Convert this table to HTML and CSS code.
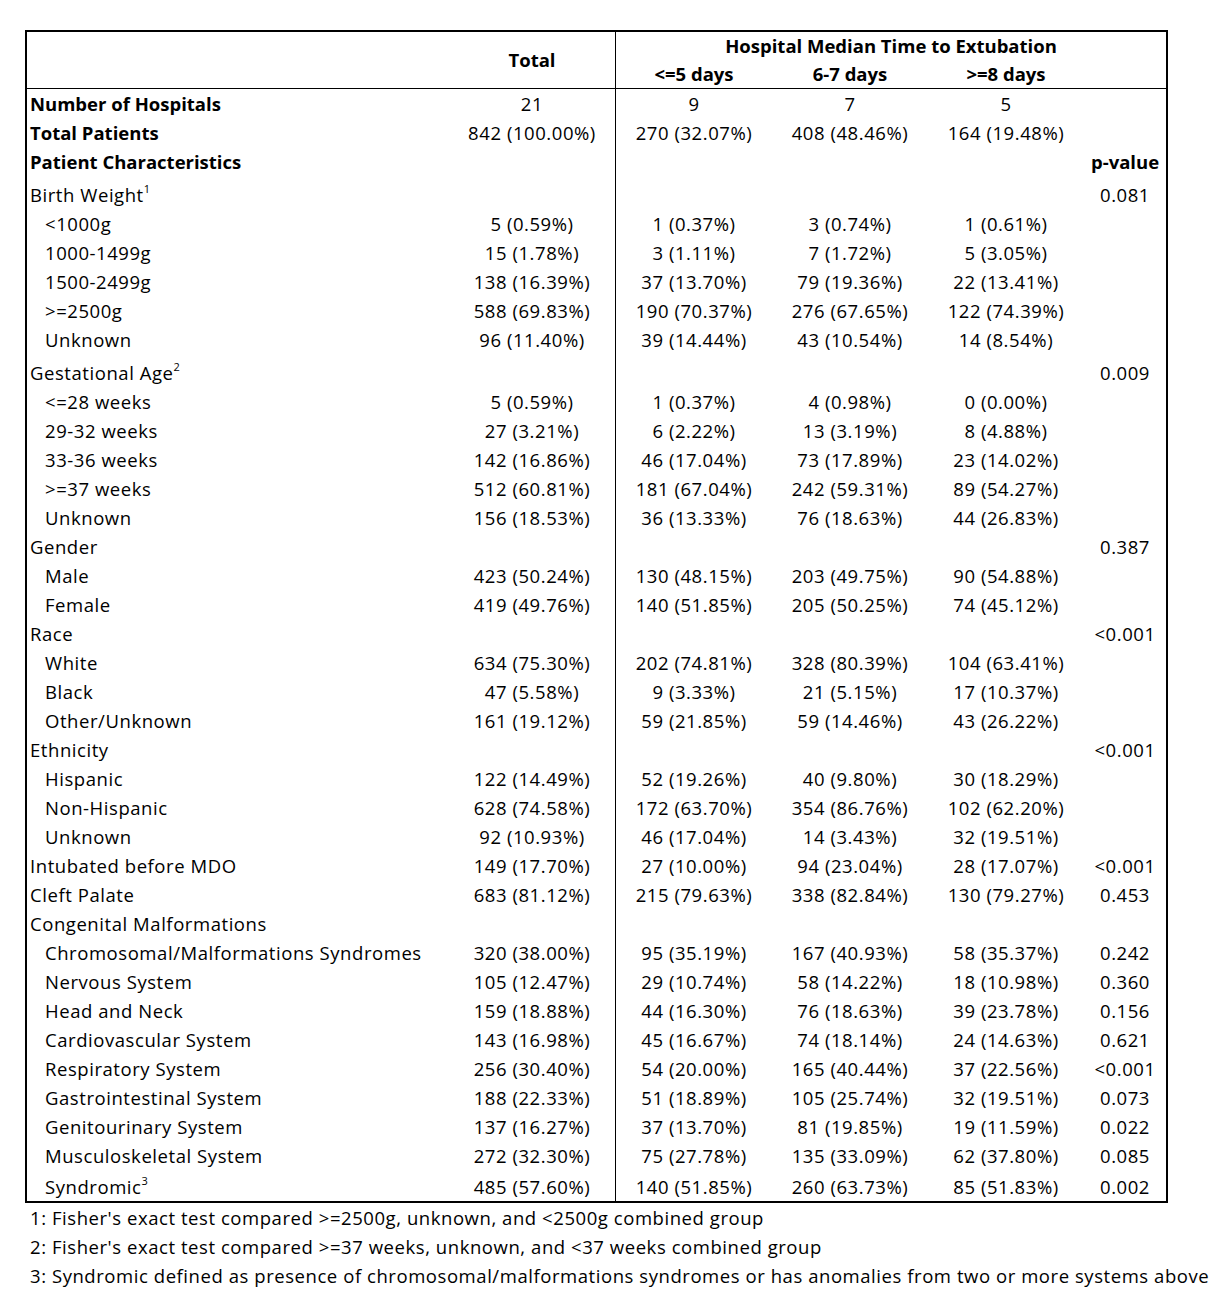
FILE: index.html
```html
<!DOCTYPE html>
<html>
<head>
<meta charset="utf-8">
<link rel="stylesheet" href="styles.css">
</head>
<body>
<div class="page">
<table class="tbl">
<colgroup>
<col class="c-label"><col class="c-total"><col class="c-g1"><col class="c-g"><col class="c-g"><col class="c-p">
</colgroup>
<thead>
<tr class="h1"><th></th><th rowspan="2" class="total-h">Total</th><th colspan="4" class="grp-h vl">Hospital Median Time to Extubation</th></tr>
<tr class="h2"><th></th><th class="vl">&lt;=5 days</th><th>6-7 days</th><th>&gt;=8 days</th><th></th></tr>
</thead>
<tbody>
<tr class="b"><td class="l0">Number of Hospitals</td><td>21</td><td class="vl">9</td><td>7</td><td>5</td><td></td></tr>
<tr class="b"><td class="l0">Total Patients</td><td>842 (100.00%)</td><td class="vl">270 (32.07%)</td><td>408 (48.46%)</td><td>164 (19.48%)</td><td></td></tr>
<tr class="b"><td class="l0">Patient Characteristics</td><td></td><td class="vl"></td><td></td><td></td><td class="pv">p-value</td></tr>
<tr class="sup"><td class="l0">Birth Weight<sup>1</sup></td><td></td><td class="vl"></td><td></td><td></td><td>0.081</td></tr>
<tr><td class="l1">&lt;1000g</td><td>5 (0.59%)</td><td class="vl">1 (0.37%)</td><td>3 (0.74%)</td><td>1 (0.61%)</td><td></td></tr>
<tr><td class="l1">1000-1499g</td><td>15 (1.78%)</td><td class="vl">3 (1.11%)</td><td>7 (1.72%)</td><td>5 (3.05%)</td><td></td></tr>
<tr><td class="l1">1500-2499g</td><td>138 (16.39%)</td><td class="vl">37 (13.70%)</td><td>79 (19.36%)</td><td>22 (13.41%)</td><td></td></tr>
<tr><td class="l1">&gt;=2500g</td><td>588 (69.83%)</td><td class="vl">190 (70.37%)</td><td>276 (67.65%)</td><td>122 (74.39%)</td><td></td></tr>
<tr><td class="l1">Unknown</td><td>96 (11.40%)</td><td class="vl">39 (14.44%)</td><td>43 (10.54%)</td><td>14 (8.54%)</td><td></td></tr>
<tr class="sup"><td class="l0">Gestational Age<sup>2</sup></td><td></td><td class="vl"></td><td></td><td></td><td>0.009</td></tr>
<tr><td class="l1">&lt;=28 weeks</td><td>5 (0.59%)</td><td class="vl">1 (0.37%)</td><td>4 (0.98%)</td><td>0 (0.00%)</td><td></td></tr>
<tr><td class="l1">29-32 weeks</td><td>27 (3.21%)</td><td class="vl">6 (2.22%)</td><td>13 (3.19%)</td><td>8 (4.88%)</td><td></td></tr>
<tr><td class="l1">33-36 weeks</td><td>142 (16.86%)</td><td class="vl">46 (17.04%)</td><td>73 (17.89%)</td><td>23 (14.02%)</td><td></td></tr>
<tr><td class="l1">&gt;=37 weeks</td><td>512 (60.81%)</td><td class="vl">181 (67.04%)</td><td>242 (59.31%)</td><td>89 (54.27%)</td><td></td></tr>
<tr><td class="l1">Unknown</td><td>156 (18.53%)</td><td class="vl">36 (13.33%)</td><td>76 (18.63%)</td><td>44 (26.83%)</td><td></td></tr>
<tr><td class="l0">Gender</td><td></td><td class="vl"></td><td></td><td></td><td>0.387</td></tr>
<tr><td class="l1">Male</td><td>423 (50.24%)</td><td class="vl">130 (48.15%)</td><td>203 (49.75%)</td><td>90 (54.88%)</td><td></td></tr>
<tr><td class="l1">Female</td><td>419 (49.76%)</td><td class="vl">140 (51.85%)</td><td>205 (50.25%)</td><td>74 (45.12%)</td><td></td></tr>
<tr><td class="l0">Race</td><td></td><td class="vl"></td><td></td><td></td><td>&lt;0.001</td></tr>
<tr><td class="l1">White</td><td>634 (75.30%)</td><td class="vl">202 (74.81%)</td><td>328 (80.39%)</td><td>104 (63.41%)</td><td></td></tr>
<tr><td class="l1">Black</td><td>47 (5.58%)</td><td class="vl">9 (3.33%)</td><td>21 (5.15%)</td><td>17 (10.37%)</td><td></td></tr>
<tr><td class="l1">Other/Unknown</td><td>161 (19.12%)</td><td class="vl">59 (21.85%)</td><td>59 (14.46%)</td><td>43 (26.22%)</td><td></td></tr>
<tr><td class="l0">Ethnicity</td><td></td><td class="vl"></td><td></td><td></td><td>&lt;0.001</td></tr>
<tr><td class="l1">Hispanic</td><td>122 (14.49%)</td><td class="vl">52 (19.26%)</td><td>40 (9.80%)</td><td>30 (18.29%)</td><td></td></tr>
<tr><td class="l1">Non-Hispanic</td><td>628 (74.58%)</td><td class="vl">172 (63.70%)</td><td>354 (86.76%)</td><td>102 (62.20%)</td><td></td></tr>
<tr><td class="l1">Unknown</td><td>92 (10.93%)</td><td class="vl">46 (17.04%)</td><td>14 (3.43%)</td><td>32 (19.51%)</td><td></td></tr>
<tr><td class="l0">Intubated before MDO</td><td>149 (17.70%)</td><td class="vl">27 (10.00%)</td><td>94 (23.04%)</td><td>28 (17.07%)</td><td>&lt;0.001</td></tr>
<tr><td class="l0">Cleft Palate</td><td>683 (81.12%)</td><td class="vl">215 (79.63%)</td><td>338 (82.84%)</td><td>130 (79.27%)</td><td>0.453</td></tr>
<tr><td class="l0">Congenital Malformations</td><td></td><td class="vl"></td><td></td><td></td><td></td></tr>
<tr><td class="l1">Chromosomal/Malformations Syndromes</td><td>320 (38.00%)</td><td class="vl">95 (35.19%)</td><td>167 (40.93%)</td><td>58 (35.37%)</td><td>0.242</td></tr>
<tr><td class="l1">Nervous System</td><td>105 (12.47%)</td><td class="vl">29 (10.74%)</td><td>58 (14.22%)</td><td>18 (10.98%)</td><td>0.360</td></tr>
<tr><td class="l1">Head and Neck</td><td>159 (18.88%)</td><td class="vl">44 (16.30%)</td><td>76 (18.63%)</td><td>39 (23.78%)</td><td>0.156</td></tr>
<tr><td class="l1">Cardiovascular System</td><td>143 (16.98%)</td><td class="vl">45 (16.67%)</td><td>74 (18.14%)</td><td>24 (14.63%)</td><td>0.621</td></tr>
<tr><td class="l1">Respiratory System</td><td>256 (30.40%)</td><td class="vl">54 (20.00%)</td><td>165 (40.44%)</td><td>37 (22.56%)</td><td>&lt;0.001</td></tr>
<tr><td class="l1">Gastrointestinal System</td><td>188 (22.33%)</td><td class="vl">51 (18.89%)</td><td>105 (25.74%)</td><td>32 (19.51%)</td><td>0.073</td></tr>
<tr><td class="l1">Genitourinary System</td><td>137 (16.27%)</td><td class="vl">37 (13.70%)</td><td>81 (19.85%)</td><td>19 (11.59%)</td><td>0.022</td></tr>
<tr><td class="l1">Musculoskeletal System</td><td>272 (32.30%)</td><td class="vl">75 (27.78%)</td><td>135 (33.09%)</td><td>62 (37.80%)</td><td>0.085</td></tr>
<tr class="last"><td class="l1">Syndromic<sup>3</sup></td><td>485 (57.60%)</td><td class="vl">140 (51.85%)</td><td>260 (63.73%)</td><td>85 (51.83%)</td><td>0.002</td></tr>
</tbody>
</table>
<div class="notes">
<p>1: Fisher's exact test compared &gt;=2500g, unknown, and &lt;2500g combined group</p>
<p>2: Fisher's exact test compared &gt;=37 weeks, unknown, and &lt;37 weeks combined group</p>
<p>3: Syndromic defined as presence of chromosomal/malformations syndromes or has anomalies from two or more systems above</p>
</div>
</div>
</body>
</html>
```
FILE: styles.css
```css
html, body {
  margin: 0;
  padding: 0;
  background: #fff;
}
.page {
  padding: 30px 0 0 25px;
  font-family: "Open Sans", sans-serif;
  font-size: 18.5px;
  letter-spacing: 0.56px;
  color: #000;
}
.tbl {
  width: 1143px;
  table-layout: fixed;
  border-collapse: separate;
  border-spacing: 0;
  border: 2px solid #000;
}
.c-label { width: 422px; }
.c-total { width: 166px; }
.c-g1 { width: 157px; }
.c-g { width: 156px; }
.c-p { width: 82px; }
.tbl th, .tbl td {
  padding: 0;
  text-align: center;
  white-space: nowrap;
  vertical-align: bottom;
  line-height: 28px;
}
.tbl th { font-weight: 700; letter-spacing: 0; }
.tbl .vl { border-left: 1px solid #000; }
.h1 th { height: 28px; }
.h2 th { height: 28px; border-bottom: 1px solid #000; }
.h2 th.vl { border-left: 1px solid #000; }
.tbl th.total-h { vertical-align: middle; border-bottom: 1px solid #000; }
.h2 th:first-child { border-bottom: 1px solid #000; }
.tbl td { height: 29px; }
.tbl tr.sup td { height: 33px; }
.tbl tr.last td { height: 31px; padding-bottom: 0; }
.tbl tr.b td { font-weight: 400; }
.tbl td.l0 { text-align: left; padding-left: 3px; }
.tbl tr.b td.l0, .tbl tr.b td.pv { font-weight: 700; letter-spacing: 0; }
.tbl td.l1 { text-align: left; padding-left: 18px; }
sup {
  font-size: 11px;
  line-height: 0;
  vertical-align: 9px;
  letter-spacing: 0;
}
.notes {
  padding-left: 5px;
}
.notes p {
  margin: 0;
  height: 29px;
  line-height: 29px;
}
```
